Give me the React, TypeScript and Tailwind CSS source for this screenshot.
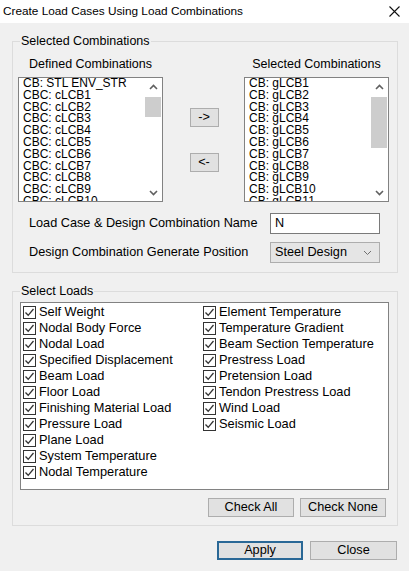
import React from 'react';

const leftItems = [
  'CB: STL ENV_STR',
  'CBC: cLCB1',
  'CBC: cLCB2',
  'CBC: cLCB3',
  'CBC: cLCB4',
  'CBC: cLCB5',
  'CBC: cLCB6',
  'CBC: cLCB7',
  'CBC: cLCB8',
  'CBC: cLCB9',
  'CBC: cLCB10',
];

const rightItems = [
  'CB: gLCB1',
  'CB: gLCB2',
  'CB: gLCB3',
  'CB: gLCB4',
  'CB: gLCB5',
  'CB: gLCB6',
  'CB: gLCB7',
  'CB: gLCB8',
  'CB: gLCB9',
  'CB: gLCB10',
  'CB: gLCB11',
];

const leftLoads = [
  'Self Weight',
  'Nodal Body Force',
  'Nodal Load',
  'Specified Displacement',
  'Beam Load',
  'Floor Load',
  'Finishing Material Load',
  'Pressure Load',
  'Plane Load',
  'System Temperature',
  'Nodal Temperature',
];

const rightLoads = [
  'Element Temperature',
  'Temperature Gradient',
  'Beam Section Temperature',
  'Prestress Load',
  'Pretension Load',
  'Tendon Prestress Load',
  'Wind Load',
  'Seismic Load',
];

function Chevron({ up }: { up?: boolean }) {
  return (
    <svg width="9" height="6" viewBox="0 0 9 6">
      <path
        d={up ? 'M1 5 L4.5 1.5 L8 5' : 'M1 1 L4.5 4.5 L8 1'}
        fill="none"
        stroke="#606060"
        strokeWidth="1.6"
      />
    </svg>
  );
}

// list box with a fake vertical scrollbar
function ListBox({ items, thumb }: { items: string[]; thumb: string }) {
  return (
    <div className="flex w-[145px] h-[125px] border border-[#828282] bg-white overflow-hidden">
      <div className="flex-1 pl-[4px] overflow-hidden">
        {items.map((t) => (
          <div key={t} className="h-[11.8px] leading-[11.8px] text-[12px] text-black whitespace-nowrap">
            {t}
          </div>
        ))}
      </div>
      <div className="w-[17px] flex flex-col items-center pr-[1px]">
        <div className="h-[17px] flex items-center justify-center">
          <Chevron up />
        </div>
        <div className="flex-1 w-full">
          <div className={`w-full bg-[#cdcdcd] ${thumb}`} />
        </div>
        <div className="h-[17px] flex items-center justify-center">
          <Chevron />
        </div>
      </div>
    </div>
  );
}

function Btn({
  children,
  className = '',
  border = 'border border-[#adadad]',
}: {
  children: React.ReactNode;
  className?: string;
  border?: string;
}) {
  return (
    <button
      type="button"
      className={`h-[19px] bg-[#e1e1e1] ${border} text-[12.7px] leading-none text-black flex items-center justify-center ${className}`}
    >
      {children}
    </button>
  );
}

function Check({ label }: { label: string }) {
  return (
    <div className="h-[16px] flex items-center">
      <span className="w-[13px] h-[13px] border border-[#333333] bg-white flex items-center justify-center">
        <svg width="11" height="11" viewBox="0 0 11 11">
          <path d="M1.5 5.5 L4.2 8.3 L9.5 2" fill="none" stroke="#333333" strokeWidth="1.3" />
        </svg>
      </span>
      <span className="ml-[3px] text-[12.8px] leading-none text-black whitespace-nowrap">{label}</span>
    </div>
  );
}

export default function App() {
  return (
    <div
      className="w-[409px] h-[571px] bg-[#f0f0f0] overflow-hidden"
      style={{ fontFamily: '"Liberation Sans", Arial, sans-serif' }}
    >
      {/* title bar */}
      <div className="h-[23px] bg-white flex items-center justify-between pl-[3px] pr-[9px]">
        <span className="text-[11.8px] text-black">Create Load Cases Using Load Combinations</span>
        <svg width="11" height="11" viewBox="0 0 11 11">
          <path d="M0.5 0.5 L10.5 10.5 M10.5 0.5 L0.5 10.5" stroke="#111" strokeWidth="1.1" />
        </svg>
      </div>

      {/* Selected Combinations group */}
      <div className="relative mt-[18px] ml-[12px] w-[386px] h-[232px] border border-[#dcdcdc]">
        <span className="absolute -top-[8px] left-[7px] px-[1px] bg-[#f0f0f0] text-[12.5px] leading-[14px] text-black">
          Selected Combinations
        </span>

        <div className="pt-[15px] pl-[5px]">
          <div className="flex text-[12.5px] leading-[14px] text-black">
            <span className="w-[145px] text-center">Defined Combinations</span>
            <span className="w-[81px]" />
            <span className="w-[145px] text-center">Selected Combinations</span>
          </div>

          <div className="flex mt-[6px]">
            <ListBox items={leftItems} thumb="mt-[2px] h-[20px]" />
            <div className="w-[81px] flex flex-col items-center pt-[31px] gap-[26px] pl-[1px]">
              <Btn className="w-[29px]">-&gt;</Btn>
              <Btn className="w-[29px]">&lt;-</Btn>
            </div>
            <ListBox items={rightItems} thumb="mt-[2px] h-[51px]" />
          </div>
        </div>

        <div className="mt-[11px] pl-[16px] pr-[17px] flex items-center justify-between">
          <span className="text-[12.7px] text-black">Load Case &amp; Design Combination Name</span>
          <div className="w-[110px] h-[21px] border border-[#7a7a7a] bg-white pl-[4px] text-[12.7px] leading-[18px] text-black">
            N
          </div>
        </div>

        <div className="mt-[8px] pl-[16px] pr-[17px] flex items-center justify-between">
          <span className="text-[12.7px] text-black">Design Combination Generate Position</span>
          <div className="w-[110px] h-[21px] border border-[#adadad] bg-[#e5e5e5] pl-[4px] pr-[7px] flex items-center justify-between text-[12.7px] text-black">
            <span>Steel Design</span>
            <svg width="9" height="6" viewBox="0 0 9 6">
              <path d="M1 1 L4.5 4.5 L8 1" fill="none" stroke="#707070" strokeWidth="1" />
            </svg>
          </div>
        </div>
      </div>

      {/* Select Loads group */}
      <div className="relative mt-[18px] ml-[12px] w-[386px] h-[235px] border border-[#dcdcdc]">
        <span className="absolute -top-[8px] left-[7px] px-[1px] bg-[#f0f0f0] text-[12.5px] leading-[14px] text-black">
          Select Loads
        </span>

        <div className="mt-[10px] ml-[7px] w-[369px] h-[188px] border border-[#828282] bg-white pl-[2px] pt-[1px] grid grid-cols-[180px_1fr]">
          <div className="flex flex-col">
            {leftLoads.map((l) => (
              <Check key={l} label={l} />
            ))}
          </div>
          <div className="flex flex-col">
            {rightLoads.map((l) => (
              <Check key={l} label={l} />
            ))}
          </div>
        </div>

        <div className="mt-[8px] pr-[11px] flex justify-end gap-[6px]">
          <Btn className="w-[86px]">Check All</Btn>
          <Btn className="w-[86px]">Check None</Btn>
        </div>
      </div>

      {/* dialog buttons */}
      <div className="mt-[15px] pr-[12px] flex justify-end gap-[7px]">
        <Btn className="w-[86px]" border="border-2 border-[#2a6896]">
          Apply
        </Btn>
        <Btn className="w-[87px]">Close</Btn>
      </div>
    </div>
  );
}
